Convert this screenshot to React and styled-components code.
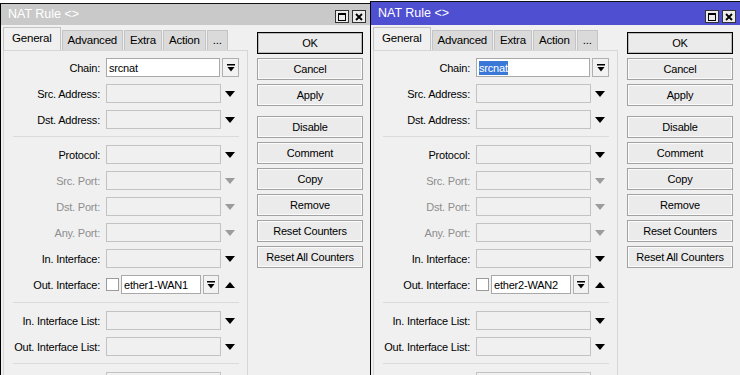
import React from "react";
import styled, { createGlobalStyle } from "styled-components";

const Global = createGlobalStyle`
  html, body { margin: 0; padding: 0; background: #fff; }
  body { font-family: "Liberation Sans", Arial, sans-serif; font-size: 11px; letter-spacing: -0.2px; }
`;

const Page = styled.div`
  display: flex;
  align-items: flex-start;
  width: 740px;
  height: 375px;
  overflow: hidden;
  background: #fff;
`;

const Window = styled.div`
  flex: ${(p) => (p.$w ? `0 0 ${p.$w}px` : "1")};
  margin-top: ${(p) => p.$top}px;
  height: 420px;
  border-top: 1px solid #111;
  border-left: 1px solid #000;
  background: #f0f0f0;
  display: flex;
  flex-direction: column;
`;

const TitleBar = styled.div`
  height: ${(p) => p.$h}px;
  background: ${(p) => (p.$active ? "#4f4fd2" : "#c9c9c9")};
  color: #fff;
  display: flex;
  align-items: flex-end;
  padding: 0 4px 2px 7px;
  box-sizing: border-box;
`;

const Title = styled.span`
  font-size: 12.5px;
  letter-spacing: 0;
  align-self: center;
  padding-top: 1px;
`;

const TitleBtns = styled.div`
  margin-left: auto;
  display: flex;
  gap: 3px;
`;

const TitleBtn = styled.div`
  width: 14px;
  height: 13px;
  box-sizing: border-box;
  border: 1px solid #333;
  background: #ececec;
  display: flex;
  align-items: center;
  justify-content: center;
`;

const Body = styled.div`
  display: flex;
  gap: 9px;
  padding: 2px 5px 0 2px;
  flex: 1;
`;

const TabArea = styled.div`
  width: 245px;
  display: flex;
  flex-direction: column;
`;

const Tabs = styled.div`
  display: flex;
  align-items: flex-end;
  height: 23px;
`;

const Tab = styled.div`
  height: ${(p) => (p.$active ? 23 : 20)}px;
  box-sizing: border-box;
  padding: ${(p) => (p.$active ? "4px 8px 0" : "3px 5px 0")};
  border: 1px solid #c4c4c4;
  border-bottom: none;
  margin-right: 1px;
  background: ${(p) => (p.$active ? "#f0f0f0" : "#dadada")};
  color: #000;
  font-size: 11.5px;
  white-space: nowrap;
`;

const Panel = styled.div`
  flex: 1;
  border: 1px solid #d6d6d6;
  padding-top: 7px;
`;

const Section = styled.div`
  display: grid;
  row-gap: 7px;
`;

const Separator = styled.div`
  height: 1px;
  background: #dadada;
  margin: ${(p) => p.$m || "7px 8px 8px 9px"};
`;

const Row = styled.div`
  display: flex;
  align-items: center;
  height: 19px;
`;

const Label = styled.div`
  width: 96px;
  margin-right: 6px;
  text-align: right;
  white-space: nowrap;
  color: ${(p) => (p.$disabled ? "#8e8e8e" : "#000")};
`;

const Field = styled.div`
  width: ${(p) => p.$w}px;
  height: 19px;
  box-sizing: border-box;
  border: 1px solid ${(p) => (p.$white ? "#a9a9a9" : "#c3c3c3")};
  background: ${(p) => (p.$white ? "#fff" : "#f0f0f0")};
  display: flex;
  align-items: center;
  padding-left: 2px;
  color: #000;
`;

const Selected = styled.span`
  background: #3a78d8;
  color: #fff;
  padding: 1px 0;
`;

const DropBtn = styled.div`
  width: ${(p) => p.$w}px;
  height: 19px;
  box-sizing: border-box;
  margin-left: ${(p) => p.$ml}px;
  border: 1px solid #b0b0b0;
  background: #f2f2f2;
  display: flex;
  align-items: center;
  justify-content: center;
`;

const ArrowBox = styled.div`
  margin-left: ${(p) => p.$ml}px;
  width: 10px;
  display: flex;
  align-items: center;
`;

const Check = styled.div`
  width: 13px;
  height: 13px;
  box-sizing: border-box;
  border: 1px solid #9b9b9b;
  background: #fff;
  margin-right: 2px;
`;

const ButtonCol = styled.div`
  display: flex;
  flex-direction: column;
  gap: 4px;
  padding-top: 5px;
`;

const Button = styled.div`
  width: 106px;
  height: 22px;
  box-sizing: border-box;
  margin-top: ${(p) => (p.$gapTop ? 6 : 0)}px;
  border: 1px solid ${(p) => (p.$default ? "#000" : "#a2a2a2")};
  box-shadow: inset 0 0 0 1px ${(p) => (p.$default ? "#b9b9b9" : "#fbfbfb")};
  background: #ebebeb;
  display: flex;
  align-items: center;
  justify-content: center;
  color: #000;
`;

const Arrow = ({ up, disabled }) => (
  <svg width="10" height="6" viewBox="0 0 10 6">
    <polygon
      points={up ? "0,6 10,6 5,0" : "0,0 10,0 5,6"}
      fill={disabled ? "#9c9c9c" : "#000"}
    />
  </svg>
);

const DropIcon = () => (
  <svg width="8" height="8" viewBox="0 0 8 8">
    <rect x="0" y="0" width="8" height="1.5" fill="#000" />
    <polygon points="0.5,3 7.5,3 4,7.5" fill="#000" />
  </svg>
);

const MaxIcon = () => (
  <svg width="8" height="8" viewBox="0 0 8 8">
    <rect x="0.5" y="0.5" width="7" height="7" fill="none" stroke="#000" strokeWidth="1" />
    <rect x="0" y="0" width="8" height="2" fill="#000" />
  </svg>
);

const CloseIcon = () => (
  <svg width="8" height="8" viewBox="0 0 8 8">
    <path d="M1 1 L7 7 M7 1 L1 7" stroke="#000" strokeWidth="1.8" />
  </svg>
);

const sections = [
  [
    { label: "Chain:", kind: "chain" },
    { label: "Src. Address:" },
    { label: "Dst. Address:" },
  ],
  [
    { label: "Protocol:" },
    { label: "Src. Port:", disabled: true },
    { label: "Dst. Port:", disabled: true },
    { label: "Any. Port:", disabled: true },
    { label: "In. Interface:" },
    { label: "Out. Interface:", kind: "iface" },
  ],
  [{ label: "In. Interface List:" }, { label: "Out. Interface List:" }],
  [{ label: "" }],
];

const buttons = [
  "OK",
  "Cancel",
  "Apply",
  "Disable",
  "Comment",
  "Copy",
  "Remove",
  "Reset Counters",
  "Reset All Counters",
];

function FormRow({ item, iface, selected }) {
  if (item.kind === "chain") {
    return (
      <Row>
        <Label>{item.label}</Label>
        <Field $w={114} $white>
          {selected ? <Selected>srcnat</Selected> : "srcnat"}
        </Field>
        <DropBtn $w={17} $ml={2}>
          <DropIcon />
        </DropBtn>
      </Row>
    );
  }
  if (item.kind === "iface") {
    return (
      <Row>
        <Label>{item.label}</Label>
        <Check />
        <Field $w={80} $white>
          {iface}
        </Field>
        <DropBtn $w={16} $ml={2}>
          <DropIcon />
        </DropBtn>
        <ArrowBox $ml={6}>
          <Arrow up />
        </ArrowBox>
      </Row>
    );
  }
  return (
    <Row>
      <Label $disabled={item.disabled}>{item.label}</Label>
      <Field $w={115} />
      <ArrowBox $ml={4}>
        <Arrow disabled={item.disabled} />
      </ArrowBox>
    </Row>
  );
}

function NatWindow({ active, top, width, iface }) {
  return (
    <Window $top={top} $w={width}>
      <TitleBar $active={active} $h={24 - top}>
        <Title>NAT Rule &lt;&gt;</Title>
        <TitleBtns>
          <TitleBtn>
            <MaxIcon />
          </TitleBtn>
          <TitleBtn>
            <CloseIcon />
          </TitleBtn>
        </TitleBtns>
      </TitleBar>
      <Body>
        <TabArea>
          <Tabs>
            <Tab $active>General</Tab>
            <Tab>Advanced</Tab>
            <Tab>Extra</Tab>
            <Tab>Action</Tab>
            <Tab>...</Tab>
          </Tabs>
          <Panel>
            {sections.map((rows, i) => (
              <React.Fragment key={i}>
                {i > 0 && <Separator $m={i === 2 ? "8px 8px 8px 9px" : undefined} />}
                <Section>
                  {rows.map((item, j) => (
                    <FormRow key={j} item={item} iface={iface} selected={active} />
                  ))}
                </Section>
              </React.Fragment>
            ))}
          </Panel>
        </TabArea>
        <ButtonCol>
          {buttons.map((b, i) => (
            <Button key={b} $default={i === 0} $gapTop={i === 3}>
              {b}
            </Button>
          ))}
        </ButtonCol>
      </Body>
    </Window>
  );
}

export default function App() {
  return (
    <Page>
      <Global />
      <NatWindow top={3} width={369} iface="ether1-WAN1" />
      <NatWindow active top={1} iface="ether2-WAN2" />
    </Page>
  );
}
